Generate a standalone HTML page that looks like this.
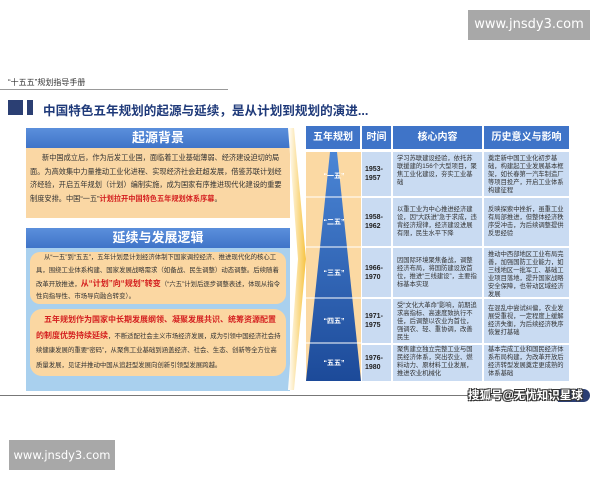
<!DOCTYPE html>
<html><head><meta charset="utf-8"><style>
*{margin:0;padding:0;box-sizing:border-box}
body{width:600px;height:480px;background:#fff;position:relative;overflow:hidden;font-family:"Liberation Sans","Noto Sans CJK SC",sans-serif}
.a{position:absolute}
.wm{background:#a8a8a8;color:#fff;font-size:13px;text-align:center;font-family:"DejaVu Sans",sans-serif}
.hd{background:linear-gradient(#5b8fdc,#3f74c8);color:#fff;font-weight:bold;text-align:center;font-size:13px;line-height:19px}
.txt{font-size:7.2px;line-height:13.5px;color:#333}
.red{color:#d42020;font-weight:bold}
.th{background:#3f74c8;color:#fff;font-weight:bold;font-size:10px;text-align:center;line-height:23px}
.td{background:#c9dbf2;font-size:6.3px;line-height:8px;color:#333;padding:3px 4px}
.yr{font-weight:bold;font-size:7px;line-height:9px;color:#222;display:flex;align-items:center;padding-left:3px}
</style></head><body>
<div class="a wm" style="left:468px;top:10px;width:122px;height:30px;line-height:30px">www.jnsdy3.com</div>
<div class="a" style="left:8px;top:77px;font-size:8px;color:#333">“十五五”规划指导手册</div>
<div class="a" style="left:0;top:89px;width:228px;height:1px;background:#999"></div>
<div class="a" style="left:8px;top:100px;width:15px;height:15px;background:#2b3f73"></div>
<div class="a" style="left:27px;top:100px;width:6px;height:15px;background:#2b3f73"></div>
<div class="a" style="left:43px;top:100px;font-size:12.6px;font-weight:bold;color:#1f3a7a;white-space:nowrap">中国特色五年规划的起源与延续，是从计划到规划的演进...</div>

<div class="a hd" style="left:26px;top:128px;width:264px;height:20px">起源背景</div>
<div class="a" style="left:26px;top:148px;width:264px;height:70px;background:#fad7a4"></div>
<div class="a txt" style="left:30px;top:151px;width:258px;text-indent:12px">新中国成立后，作为后发工业国，面临着工业基础薄弱、经济建设迫切的局面。为高效集中力量推动工业化进程、实现经济社会赶超发展，借鉴苏联计划经济经验，开启五年规划（计划）编制实施，成为国家有序推进现代化建设的重要制度安排。中国“一五”<span class="red">计划拉开中国特色五年规划体系序幕</span>。</div>

<div class="a hd" style="left:26px;top:228px;width:264px;height:20px">延续与发展逻辑</div>
<div class="a" style="left:26px;top:248px;width:264px;height:143px;background:#a9d0ee"></div>
<div class="a" style="left:30px;top:252px;width:256px;height:52px;background:#fbd7a2;border-radius:10px"></div>
<div class="a txt" style="left:36px;top:252px;width:246px;font-size:6.4px;line-height:12.8px;text-indent:8px">从“一五”到“五五”，五年计划是计划经济体制下国家调控经济、推进现代化的核心工具，围绕工业体系构建、国家发展战略需求（如备战、民生调整）动态调整。后续随着改革开放推进，<span class="red" style="font-size:8px">从“计划”向“规划”转变</span>（“六五”计划后逐步调整表述，体现从指令性向指导性、市场导向融合转变）。</div>
<div class="a" style="left:30px;top:309px;width:256px;height:67px;background:#fbd7a2;border-radius:12px"></div>
<div class="a txt" style="left:36px;top:313px;width:246px;font-size:6.4px;line-height:14.5px;text-indent:8px"><span class="red" style="font-size:8px">五年规划作为国家中长期发展纲领、凝聚发展共识、统筹资源配置的制度优势持续延续</span>，不断适配社会主义市场经济发展，成为引领中国经济社会持续健康发展的重要“密码”，从聚焦工业基础到涵盖经济、社会、生态、创新等全方位高质量发展，见证并推动中国从追赶型发展向创新引领型发展跨越。</div>

<svg class="a" style="left:288px;top:128px" width="20" height="262"><defs><linearGradient id="y" x1="0" x2="1"><stop offset="0" stop-color="#fff"/><stop offset="1" stop-color="#f7c341"/></linearGradient></defs><polygon points="0,0 6,0 18,131 6,262 0,262 10,131" fill="url(#y)"/></svg>

<div class="a th" style="left:306px;top:126px;width:54px">五年规划</div>
<div class="a th" style="left:362px;top:126px;width:29px">时间</div>
<div class="a th" style="left:393px;top:126px;width:89px">核心内容</div>
<div class="a th" style="left:484px;top:126px;width:85px">历史意义与影响</div>

<div class="a" style="left:306px;top:152px;width:55px;height:229px;background:#fbd9a3"></div>
<svg class="a" style="left:306px;top:152px" width="56" height="229"><defs><linearGradient id="b" x1="0" y1="0" x2="0" y2="1"><stop offset="0" stop-color="#4b86d6"/><stop offset="1" stop-color="#1c4a99"/></linearGradient></defs>
<polygon points="24,0 31,0 55,229 0,229" fill="url(#b)"/>
<g stroke="#fff" stroke-width="1"><line x1="0" y1="45" x2="56" y2="45"/><line x1="0" y1="95" x2="56" y2="95"/><line x1="0" y1="146" x2="56" y2="146"/><line x1="0" y1="191" x2="56" y2="191"/></g>
<g fill="#fff" font-size="7" font-weight="bold" text-anchor="middle"><text x="28" y="26">“一五”</text><text x="28" y="72">“二五”</text><text x="28" y="123">“三五”</text><text x="28" y="171">“四五”</text><text x="28" y="213">“五五”</text></g></svg>

<div class="a td yr" style="left:362px;top:152px;width:29px;height:44px">1953-<br>1957</div>
<div class="a td" style="left:393px;top:152px;width:89px;height:44px">学习苏联建设经验，依托苏联援建的156个大型项目，聚焦工业化建设，夯实工业基础</div>
<div class="a td" style="left:484px;top:152px;width:85px;height:44px">奠定新中国工业化初步基础，构建起工业发展基本框架，如长春第一汽车制造厂等项目投产，开启工业体系构建征程</div>

<div class="a td yr" style="left:362px;top:198px;width:29px;height:48px">1958-<br>1962</div>
<div class="a td" style="left:393px;top:198px;width:89px;height:48px;padding-top:8px">以重工业为中心推进经济建设，因“大跃进”急于求成，违背经济规律，经济建设进展有限，民生水平下降</div>
<div class="a td" style="left:484px;top:198px;width:85px;height:48px;padding-top:8px">反映探索中挫折，虽重工业有局部推进，但整体经济秩序受冲击，为后续调整提供反思经验</div>

<div class="a td yr" style="left:362px;top:248px;width:29px;height:49px">1966-<br>1970</div>
<div class="a td" style="left:393px;top:248px;width:89px;height:49px;padding-top:9px">因国际环境聚焦备战，调整经济布局，将国防建设放首位，推进“三线建设”，主要指标基本实现</div>
<div class="a td" style="left:484px;top:248px;width:85px;height:49px">推动中西部地区工业布局完善，加强国防工业能力，如三线地区一批军工、基础工业项目落地，提升国家战略安全保障，也带动区域经济发展</div>

<div class="a td yr" style="left:362px;top:299px;width:29px;height:44px">1971-<br>1975</div>
<div class="a td" style="left:393px;top:299px;width:89px;height:44px">受“文化大革命”影响，前期追求高指标、高速度致执行不佳，后调整以农业为首位，强调农、轻、重协调，改善民生</div>
<div class="a td" style="left:484px;top:299px;width:85px;height:44px;padding-top:6px">在混乱中尝试纠偏，农业发展受重视，一定程度上缓解经济失衡，为后续经济秩序恢复打基础</div>

<div class="a td yr" style="left:362px;top:345px;width:29px;height:36px">1976-<br>1980</div>
<div class="a td" style="left:393px;top:345px;width:89px;height:36px;padding-top:1px">聚焦建立独立完整工业与国民经济体系，突出农业、燃料动力、原材料工业发展，推进农业机械化</div>
<div class="a td" style="left:484px;top:345px;width:85px;height:36px;padding-top:1px">基本完成工业和国民经济体系布局构建，为改革开放后经济转型发展奠定更成熟的体系基础</div>

<div class="a" style="left:0;top:395px;width:470px;height:1px;background:#777"></div>
<div class="a" style="left:558px;top:389px;width:32px;height:13px;background:#2b3f73;border-radius:0 7px 7px 0"></div>
<div class="a" style="left:468px;top:387px;font-size:11.5px;color:#fff;font-weight:bold;text-shadow:0 0 1px #333,1px 1px 0 #333,-1px -1px 0 #333,1px -1px 0 #333,-1px 1px 0 #333;white-space:nowrap">搜狐号@无忧知识星球</div>

<div class="a wm" style="left:9px;top:440px;width:106px;height:30px;line-height:30px;font-size:11.5px">www.jnsdy3.com</div>
</body></html>
